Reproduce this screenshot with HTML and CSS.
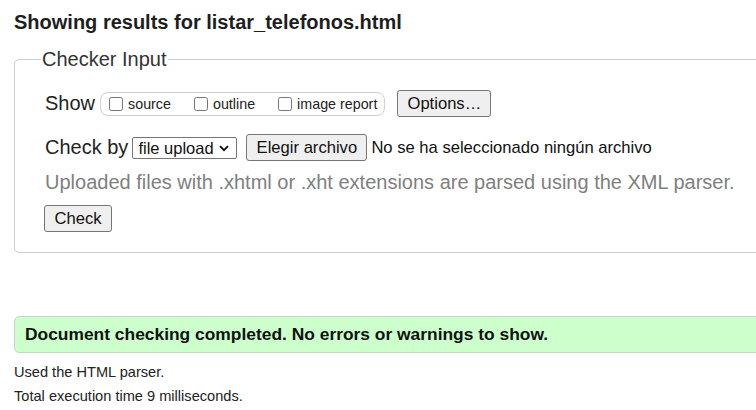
FILE: index.html
```
<!DOCTYPE html>
<html lang="en">
<head>
<meta charset="utf-8">
<title>Showing results for listar_telefonos.html</title>
<link rel="stylesheet" href="styles.css">
</head>
<body>
<div class="page">
  <h2 class="title">Showing results for listar_telefonos.html</h2>
  <fieldset class="checker">
    <legend class="checker-legend">Checker Input</legend>
    <div class="row row-show">
      <span class="row-label">Show</span>
      <div class="show-box">
        <label class="opt"><input type="checkbox" class="cb"><span>source</span></label>
        <label class="opt"><input type="checkbox" class="cb"><span>outline</span></label>
        <label class="opt opt-last"><input type="checkbox" class="cb"><span>image report</span></label>
      </div>
      <button class="btn btn-options" type="button">Options…</button>
    </div>
    <div class="row row-check">
      <span class="row-label">Check by</span>
      <span class="select-wrap">
        <select class="select"><option>file upload</option></select>
        <svg class="chevron" width="10" height="7" viewBox="0 0 10 7"><path d="M1 1.2 L5 5.2 L9 1.2" fill="none" stroke="#111" stroke-width="1.9"/></svg>
      </span>
      <button class="btn btn-file" type="button">Elegir archivo</button>
      <span class="file-text">No se ha seleccionado ningún archivo</span>
    </div>
    <p class="hint">Uploaded files with .xhtml or .xht extensions are parsed using the XML parser.</p>
    <div class="row row-submit">
      <button class="btn btn-check" type="button">Check</button>
    </div>
  </fieldset>
  <div class="success">Document checking completed. No errors or warnings to show.</div>
  <p class="meta">Used the HTML parser.</p>
  <p class="meta">Total execution time 9 milliseconds.</p>
</div>
</body>
</html>
```

FILE: styles.css
```
html, body {
  margin: 0;
  padding: 0;
  overflow: hidden;
  background: #fff;
}
body {
  font-family: "Liberation Sans", Arial, sans-serif;
  color: #222;
}
.page {
  width: 800px;
  padding-left: 14px;
}
.title {
  margin: 0;
  padding-top: 11px;
  font-size: 20px;
  line-height: 23px;
  font-weight: bold;
  color: #1e1e1e;
}
.checker {
  margin: 14px 0 0 0;
  border: 1px solid #cfcfcf;
  border-radius: 5px;
  padding: 0 0 20px 30px;
  min-width: 0;
}
.checker-legend {
  font-size: 20px;
  line-height: 23px;
  padding: 0 1px;
  margin-left: -4px;
  color: #333;
}
.row {
  display: flex;
  align-items: center;
}
.row-label {
  font-size: 20px;
  line-height: 23px;
  color: #222;
}
.row-show {
  margin-top: 19px;
  height: 27px;
}
.show-box {
  display: flex;
  align-items: center;
  box-sizing: border-box;
  height: 24px;
  margin-left: 5px;
  padding: 0 7px 0 8px;
  border: 1px solid #cfcfcf;
  border-radius: 8px;
  font-size: 14.3px;
  color: #222;
}
.opt {
  display: flex;
  align-items: center;
  margin-right: 23px;
}
.opt-last {
  margin-right: 0;
}
.cb {
  width: 14px;
  height: 14px;
  margin: 0 5px 0 0;
}
.btn {
  box-sizing: border-box;
  height: 27px;
  padding: 0;
  white-space: nowrap;
  text-align: center;
  font-family: "Liberation Sans", Arial, sans-serif;
  font-size: 16.6px;
  color: #111;
  background: #efefef;
  border: 1px solid #767676;
  border-radius: 3px;
}
.btn-options {
  margin-left: 12px;
  width: 94px;
}
.row-check {
  margin-top: 17px;
  height: 27px;
}
.select-wrap {
  position: relative;
  display: inline-flex;
  margin-left: 4px;
}
.select {
  appearance: none;
  -webkit-appearance: none;
  box-sizing: border-box;
  width: 105px;
  height: 22px;
  padding: 0 0 0 5px;
  font-family: "Liberation Sans", Arial, sans-serif;
  font-size: 16.5px;
  color: #111;
  background: #fff;
  border: 1px solid #767676;
  border-radius: 2px;
}
.chevron {
  position: absolute;
  right: 8px;
  top: 8px;
  pointer-events: none;
}
.btn-file {
  margin-left: 9px;
  width: 121px;
}
.file-text {
  margin-left: 4px;
  font-size: 16.6px;
  color: #111;
}
.hint {
  margin: 10px 0 0 0;
  font-size: 20px;
  line-height: 23px;
  color: #808080;
}
.row-submit {
  margin-top: 11px;
  margin-left: -1px;
}
.btn-check {
  width: 68px;
}
.success {
  margin-top: 63px;
  box-sizing: border-box;
  height: 37px;
  padding-left: 10px;
  line-height: 35px;
  font-size: 17.4px;
  font-weight: bold;
  color: #111;
  background: #ccffcc;
  border: 1px solid #c2d9c2;
  border-radius: 5px;
}
.meta {
  margin: 0;
  font-size: 14.6px;
  line-height: 24px;
  color: #222;
}
.success + .meta {
  margin-top: 7px;
}
```
